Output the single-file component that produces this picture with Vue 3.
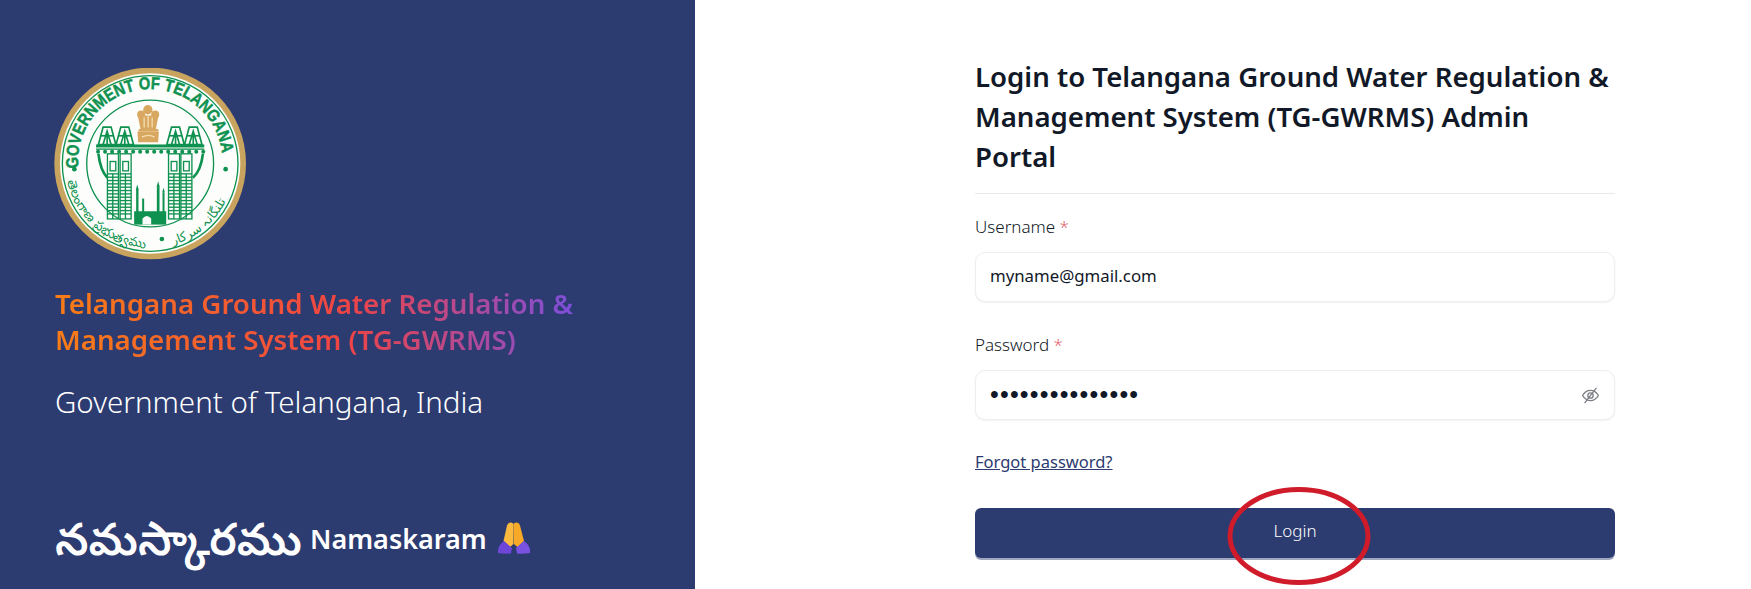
<script setup>
const columns = [232, 270, 415, 452]
const bands = [372, 382, 392, 402, 412, 422, 432, 442, 452, 462, 472, 482, 492]
const gables = [205, 258, 410, 463]
const teeth = Array.from({ length: 16 }, (_, i) => 202 + i * 21)
</script>

<template>
  <div class="page">
    <aside class="brand">
      <svg class="seal" viewBox="72 55 575 575" role="img" aria-label="Government of Telangana seal">
        <defs>
          <path id="topArc" d="M 145 355 A 216 216 0 1 1 575 355" />
          <path id="leftArc" d="M 112 392 A 253 253 0 0 0 368 594" />
          <path id="rightArc" d="M 428 585 A 253 253 0 0 0 606 400" />
        </defs>
        <circle cx="360" cy="341" r="287" fill="#c9a45f" />
        <circle cx="360" cy="341" r="270" fill="#fdfefb" />
        <circle cx="360" cy="341" r="263" fill="none" stroke="#0f9150" stroke-width="4" />
        <circle cx="360" cy="341" r="190" fill="none" stroke="#0f9150" stroke-width="4" />
        <text class="seal-text"><textPath href="#topArc" textLength="676" lengthAdjust="spacingAndGlyphs">GOVERNMENT OF TELANGANA</textPath></text>
        <text class="seal-sub"><textPath href="#leftArc" textLength="330">తెలంగాణ ప్రభుత్వము</textPath></text>
        <text class="seal-sub"><textPath href="#rightArc">تلنگانہ سرکار</textPath></text>
        <circle cx="133" cy="358" r="7" fill="#0f9150" />
        <circle cx="586" cy="358" r="7" fill="#0f9150" />
        <circle cx="395" cy="567" r="7" fill="#0f9150" />

        <g fill="none" stroke="#0f9150">
          <g v-for="x in gables" :key="x" stroke-width="5">
            <polygon :points="`${x},284 ${x + 14},232 ${x + 38},232 ${x + 52},284`" />
            <path :d="`M${x + 14} 284 L${x + 26} 244 L${x + 38} 284 M${x + 26} 244 V284`" />
            <path :d="`M${x + 7} 258 H${x + 45}`" />
          </g>
          <g v-for="x in columns" :key="x" stroke-width="4">
            <rect :x="x" y="312" width="33" height="195" />
            <rect :x="x + 8" y="335" width="17" height="28" />
            <path v-for="y in bands" :key="y" :d="`M${x} ${y} H${x + 33}`" />
            <path :d="`M${x + 16} 372 V507`" />
          </g>
          <path d="M205 312 q6 50 27 72 M518 312 q-6 50 -30 72" stroke-width="8" />
        </g>
        <g fill="#0f9150">
          <rect x="198" y="284" width="324" height="9" />
          <rect x="198" y="296" width="324" height="4" />
          <circle v-for="x in teeth" :key="x" :cx="x + 2" cy="306" r="6" />
          <rect x="318" y="420" width="7" height="68" />
          <rect x="380" y="412" width="8" height="76" />
          <rect x="397" y="428" width="6" height="60" />
          <rect x="336" y="446" width="6" height="42" />
          <rect x="312" y="484" width="96" height="40" />
          <path d="M317 420 l4 -16 l5 16z M379 412 l5 -18 l5 18z M396 428 l4 -14 l4 14z" />
        </g>
        <path d="M337 524 v-18 q13 -16 26 0 v18z" fill="#fdfefb" />
        <g fill="#d9a860">
          <circle cx="353" cy="180" r="14" />
          <circle cx="333" cy="194" r="12" />
          <circle cx="375" cy="194" r="12" />
          <path d="M323 197 h62 l-8 41 h-46z" />
          <rect x="325" y="238" width="60" height="7" rx="3" />
          <path d="M322 245 h64 l-2 32 h-60z" />
        </g>
        <path d="M342 203 v30 M354 198 v35 M366 203 v30 M335 262 q20 -10 38 0" stroke="#f4dcae" stroke-width="4" fill="none" />
      </svg>

      <h1 class="brand-title">Telangana Ground Water Regulation &amp; Management System (TG-GWRMS)</h1>
      <p class="brand-sub">Government of Telangana, India</p>

      <div class="greeting">
        <span class="telugu">నమస్కారము</span>
        <span class="namaskaram">Namaskaram</span>
        <svg class="hands" viewBox="0 0 32 32" aria-hidden="true">
          <path d="M13 0.500 q-3 0 -4 3 L5.500 19 l6.500 6 l3.500 -3 L15.500 2 q-1 -1.500 -2.500 -1.500z" fill="#fcbb3f" />
          <path d="M18 0.500 q3 0 4 3 L26 19 l-6.500 6 l-3.500 -3 L15.500 2 q1 -1.500 2.500 -1.500z" fill="#f8a928" />
          <path d="M0 31 q-1 -7 6 -12 l8 7 l-1 5.500 q-6 0.500 -13 -0.500z" fill="#6d46d8" />
          <path d="M32 31 q1 -7 -6 -12 l-8 7 l1 5.500 q6 0.500 13 -0.500z" fill="#7a52e2" />
        </svg>
      </div>
    </aside>

    <main class="panel">
      <form class="form" @submit.prevent>
        <h2 class="form-title">Login to Telangana Ground Water Regulation &amp; Management System (TG-GWRMS) Admin Portal</h2>

        <div class="field">
          <div class="label">Username <span class="req">*</span></div>
          <div class="control control-text">myname@gmail.com</div>
        </div>

        <div class="field field-password">
          <div class="label">Password <span class="req">*</span></div>
          <div class="control">
            <span class="dots">•••••••••••••••</span>
            <svg class="eye" viewBox="0 0 24 24" fill="none" stroke="#7d7f85" stroke-width="1.7" stroke-linecap="round" stroke-linejoin="round" aria-hidden="true">
              <path d="M2 12 C5 7 9 5.500 12 5.500 S19 7 22 12 C19 17 15 18.500 12 18.500 S5 17 2 12Z" />
              <circle cx="12" cy="12" r="3.400" />
              <path d="M19 3 L5 21" />
            </svg>
          </div>
        </div>

        <a class="forgot" href="#">Forgot password?</a>

        <div class="submit">
          <button class="login" type="submit">Login</button>
          <svg class="marker" viewBox="0 0 146 102" aria-hidden="true">
            <ellipse cx="72" cy="50" rx="69" ry="46.500" fill="none" stroke="#d01c2a" stroke-width="5" />
          </svg>
        </div>
      </form>
    </main>
  </div>
</template>

<style>
html, body { margin: 0; background: #fff; }
</style>

<style scoped>
.page {
  display: flex;
  height: 589px;
  overflow: hidden;
  font-family: "Noto Sans", "Noto Sans Telugu", sans-serif;
  color: #111827;
}
.brand {
  width: 695px;
  box-sizing: border-box;
  padding: 68px 0 0 55px;
  background: #2c3b70;
  color: #fff;
}
.seal { display: block; width: 192px; height: 192px; margin-left: -1px; }
.seal-text { font: 700 52px "Liberation Sans", sans-serif; fill: #0f9150; stroke: #0f9150; stroke-width: 1.500px; }
.seal-sub { font: 400 38px "Noto Sans", "DejaVu Sans", sans-serif; fill: #0f9150; }
.brand-title {
  width: 530px;
  margin: 25px 0 0;
  font-size: 27.700px;
  line-height: 36px;
  font-weight: 600;
  color: transparent;
  background: linear-gradient(90deg, #f97d16 0%, #ef4444 55%, #7c4fdc 98%);
  -webkit-background-clip: text;
  background-clip: text;
}
.brand-sub {
  margin: 27px 0 0;
  font-size: 29.500px;
  line-height: 36px;
  font-weight: 300;
}
.greeting {
  display: flex;
  align-items: center;
  margin-top: 87px;
  height: 62px;
  font-weight: 600;
}
.telugu { font-size: 45px; line-height: 62px; margin-right: 8px; }
.namaskaram { font-size: 27px; }
.hands { width: 32px; height: 32px; margin-left: 11px; }

.panel { flex: 1; }
.form { width: 640px; margin: 56px 0 0 280px; }
.form-title {
  margin: 0;
  padding-bottom: 17px;
  border-bottom: 1px solid #e8e9ec;
  font-size: 27.600px;
  line-height: 40px;
  font-weight: 600;
  color: #111827;
}
.field { margin-top: 21px; }
.field-password { margin-top: 31px; }
.label { font-size: 17px; line-height: 24px; font-weight: 300; color: #111827; }
.req { color: #e5646f; }
.control {
  display: flex;
  align-items: center;
  justify-content: space-between;
  box-sizing: border-box;
  height: 50px;
  margin-top: 13px;
  padding: 0 14px;
  border: 1px solid #eceef1;
  border-radius: 10px;
  background: #fff;
  box-shadow: 0 1px 2px rgba(0, 0, 0, 0.06);
  font-size: 16.800px;
}
.control-text { padding-bottom: 4px; }
.dots { font-size: 25px; letter-spacing: 1.200px; margin-top: -2px; font-family: "Liberation Sans", sans-serif; }
.eye { width: 19px; height: 19px; }
.forgot {
  display: inline-block;
  margin-top: 30px;
  font-size: 16.500px;
  line-height: 24px;
  color: #2c3b70;
  text-decoration: underline;
}
.submit { position: relative; margin-top: 34px; }
.login {
  display: block;
  width: 100%;
  height: 50px;
  padding: 0 0 6px;
  border: 0;
  border-radius: 6px;
  background: #2c3b70;
  box-shadow: 0 2px 0 rgba(44, 59, 112, 0.45);
  color: #fff;
  font: 300 17px "Noto Sans", sans-serif;
}
.marker {
  position: absolute;
  left: 252px;
  top: -22px;
  width: 146px;
  height: 102px;
  pointer-events: none;
}
</style>
